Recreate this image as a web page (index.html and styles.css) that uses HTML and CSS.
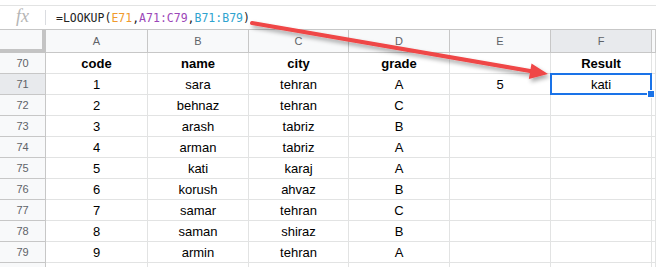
FILE: index.html
```html
<!DOCTYPE html>
<html>
<head>
    <title>LOOKUP example</title>
    <link rel="stylesheet" href="styles.css">
</head>
<body>
    <div class="formula-bar">
        <span class="fx">fx</span>
        <span class="divider"></span>
        <span class="formula">=LOOKUP(<span class="ref-e">E71</span>,<span class="ref-a">A71:C79</span>,<span class="ref-b">B71:B79</span>)</span>
    </div>

    <div class="sheet">
        <div class="corner"></div>
        <div class="col-head">A</div>
        <div class="col-head">B</div>
        <div class="col-head">C</div>
        <div class="col-head">D</div>
        <div class="col-head">E</div>
        <div class="col-head active">F</div>
        <div class="col-head"></div>

        <div class="row-head">70</div>
        <div class="cell bold">code</div>
        <div class="cell bold">name</div>
        <div class="cell bold">city</div>
        <div class="cell bold">grade</div>
        <div class="cell"></div>
        <div class="cell bold">Result</div>
        <div class="cell"></div>

        <div class="row-head active">71</div>
        <div class="cell">1</div>
        <div class="cell">sara</div>
        <div class="cell">tehran</div>
        <div class="cell">A</div>
        <div class="cell">5</div>
        <div class="cell selected">kati</div>
        <div class="cell"></div>

        <div class="row-head">72</div>
        <div class="cell">2</div>
        <div class="cell">behnaz</div>
        <div class="cell">tehran</div>
        <div class="cell">C</div>
        <div class="cell"></div>
        <div class="cell"></div>
        <div class="cell"></div>

        <div class="row-head">73</div>
        <div class="cell">3</div>
        <div class="cell">arash</div>
        <div class="cell">tabriz</div>
        <div class="cell">B</div>
        <div class="cell"></div>
        <div class="cell"></div>
        <div class="cell"></div>

        <div class="row-head">74</div>
        <div class="cell">4</div>
        <div class="cell">arman</div>
        <div class="cell">tabriz</div>
        <div class="cell">A</div>
        <div class="cell"></div>
        <div class="cell"></div>
        <div class="cell"></div>

        <div class="row-head">75</div>
        <div class="cell">5</div>
        <div class="cell">kati</div>
        <div class="cell">karaj</div>
        <div class="cell">A</div>
        <div class="cell"></div>
        <div class="cell"></div>
        <div class="cell"></div>

        <div class="row-head">76</div>
        <div class="cell">6</div>
        <div class="cell">korush</div>
        <div class="cell">ahvaz</div>
        <div class="cell">B</div>
        <div class="cell"></div>
        <div class="cell"></div>
        <div class="cell"></div>

        <div class="row-head">77</div>
        <div class="cell">7</div>
        <div class="cell">samar</div>
        <div class="cell">tehran</div>
        <div class="cell">C</div>
        <div class="cell"></div>
        <div class="cell"></div>
        <div class="cell"></div>

        <div class="row-head">78</div>
        <div class="cell">8</div>
        <div class="cell">saman</div>
        <div class="cell">shiraz</div>
        <div class="cell">B</div>
        <div class="cell"></div>
        <div class="cell"></div>
        <div class="cell"></div>

        <div class="row-head">79</div>
        <div class="cell">9</div>
        <div class="cell">armin</div>
        <div class="cell">tehran</div>
        <div class="cell">A</div>
        <div class="cell"></div>
        <div class="cell"></div>
        <div class="cell"></div>

        <div class="row-head tail"></div>
        <div class="cell tail"></div>
        <div class="cell tail"></div>
        <div class="cell tail"></div>
        <div class="cell tail"></div>
        <div class="cell tail"></div>
        <div class="cell tail"></div>
        <div class="cell tail"></div>
    </div>

    <!-- annotation arrow drawn over the sheet -->
    <svg class="arrow" width="656" height="267" viewBox="0 0 656 267">
        <defs>
            <filter id="shadow" x="-10%" y="-50%" width="120%" height="200%">
                <feDropShadow dx="2" dy="3" stdDeviation="2" flood-color="#000" flood-opacity="0.35"/>
            </filter>
        </defs>
        <g filter="url(#shadow)">
            <line x1="252" y1="23" x2="533" y2="71.5" stroke="#ef4646" stroke-width="4" stroke-linecap="round"/>
            <polygon points="548,74 531.5,63.5 528.8,79" fill="#ef4646"/>
        </g>
    </svg>
</body>
</html>
```

FILE: styles.css
```css
body { margin: 0; background: #fff; font-family: "Liberation Sans", Arial, sans-serif; overflow: hidden; }

.formula-bar { margin-top: 5px; height: 23px; border-top: 1px solid #e2e3e3; border-bottom: 1px solid #c7c7c7; display: flex; align-items: center; }
.fx { width: 45px; text-align: center; font-family: "Liberation Serif", serif; font-style: italic; font-size: 18px; color: #b5b5b5; margin-top: -2px; }
.divider { width: 1px; height: 15px; background: #dadce0; }
.formula { margin-left: 10px; font-family: "DejaVu Sans Mono", monospace; font-size: 11.5px; color: #222; }
.ref-e { color: #f09a2c; }
.ref-a { color: #9b47b8; }
.ref-b { color: #2fa3cf; }

.sheet { display: grid; grid-template-columns: 46px 102px 101px 100px 101px 101px 101px 1fr; grid-template-rows: 23px repeat(10, 21px) 4px; }
.sheet > div { box-sizing: border-box; border-right: 1px solid #e2e3e3; border-bottom: 1px solid #e2e3e3; display: flex; align-items: center; justify-content: center; }
.sheet > .tail { border-bottom: none; }

.corner { background: #f8f9fa; border-right: 4px solid #c4c4c4 !important; border-bottom: 4px solid #c4c4c4 !important; }
.col-head { background: #f8f9fa; color: #5f6368; font-size: 11px; border-right-color: #c7c7c7 !important; border-bottom-color: #c7c7c7 !important; }
.row-head { background: #f8f9fa; color: #5f6368; font-size: 11px; border-right-color: #c7c7c7 !important; border-bottom-color: #c7c7c7 !important; }
.active { background: #e8eaed; }

.cell { font-size: 13px; color: #000; }
.bold { font-weight: bold; }
.selected { position: relative; }
.selected::before { content: ""; position: absolute; left: -1px; top: -1px; right: -1px; bottom: -1px; border: 2px solid #1a73e8; }
.selected::after { content: ""; position: absolute; right: -4px; bottom: -4px; width: 6px; height: 6px; background: #1a73e8; border: 1px solid #fff; }

.arrow { position: absolute; left: 0; top: 0; pointer-events: none; }
```
